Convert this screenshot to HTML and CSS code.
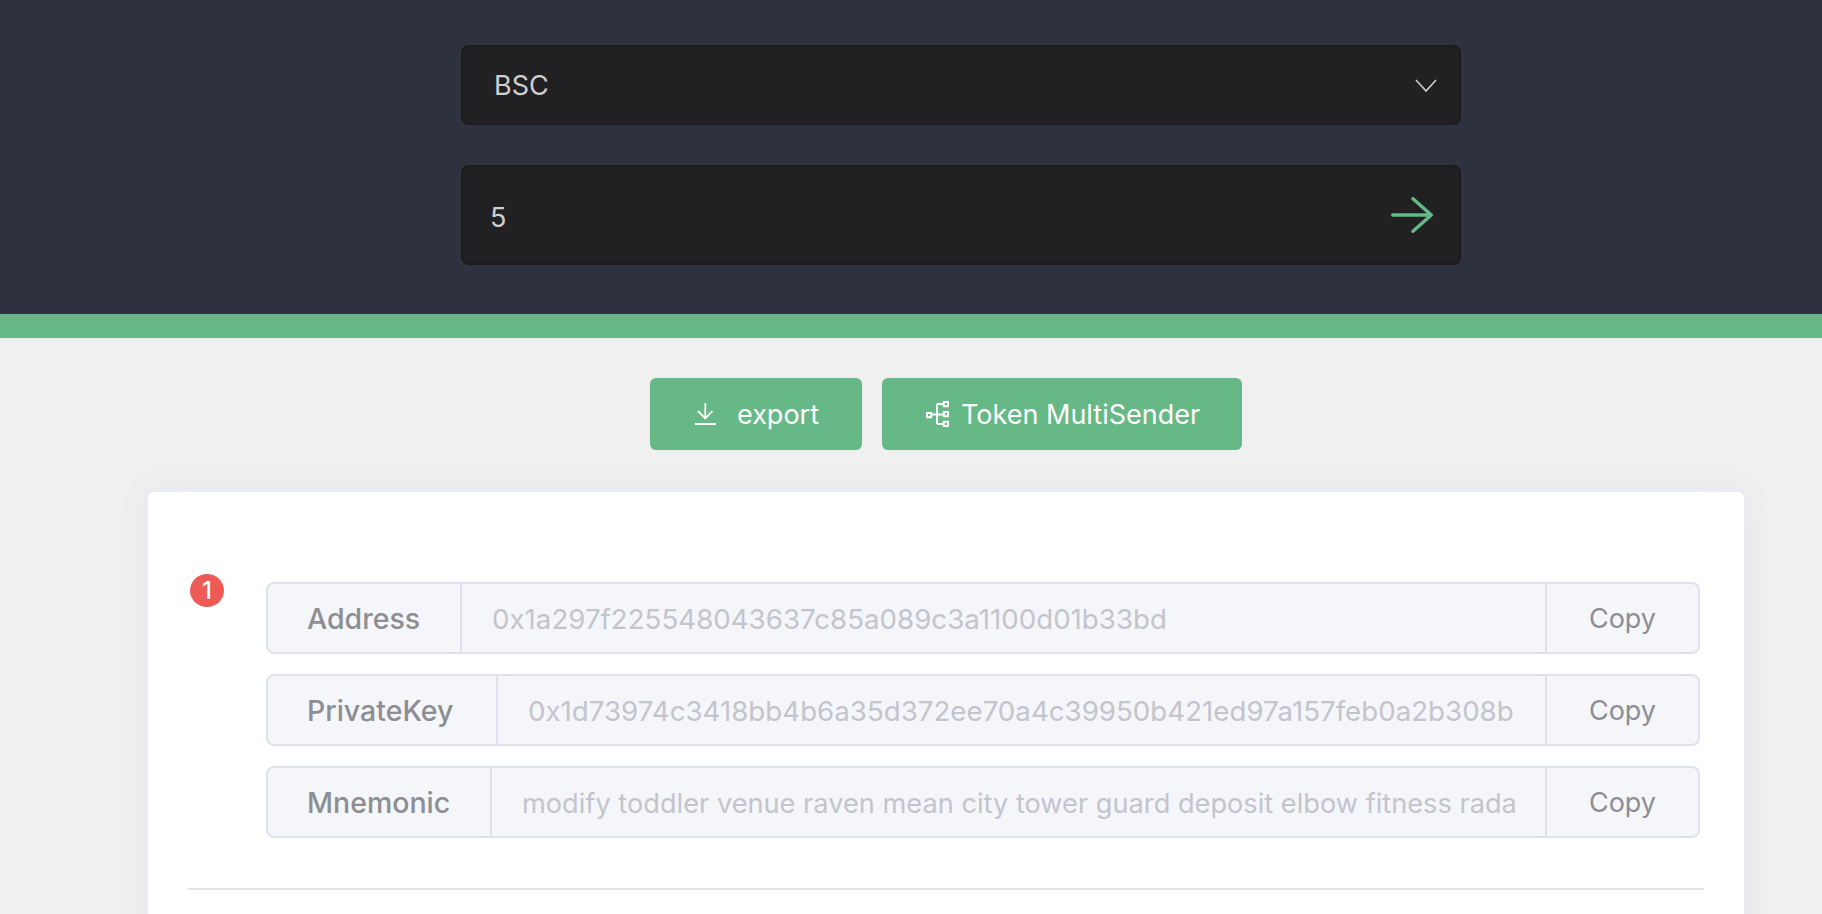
FILE: index.html
```html
<!DOCTYPE html>
<html lang="en">
<head>
<meta charset="utf-8">
<title>Wallet generator</title>
<link rel="stylesheet" href="styles.css">
</head>
<body>
<header class="hero">
  <div class="field field-select">
    <span class="field-value">BSC</span>
    <svg class="chevron" viewBox="0 0 22 13" width="22" height="13"><path d="M1 1l10 11L21 1" fill="none" stroke="#d0d0d0" stroke-width="1.6"/></svg>
  </div>
  <div class="field field-input">
    <span class="field-value field-number">5</span>
    <svg class="arrow" viewBox="0 0 42 36" width="42" height="36"><path d="M1.700 18H40M22 1.700L40.300 18 22 34.300" fill="none" stroke="#67b888" stroke-width="3.400" stroke-linecap="round" stroke-linejoin="round"/></svg>
  </div>
</header>
<div class="band"></div>
<div class="toolbar">
  <button class="btn btn-export">
    <svg class="icon" viewBox="0 0 21 22" width="21" height="22"><path d="M10.300 0v15.500M3 8l7.300 7.500L17.500 8M0 21h21" fill="none" stroke="#fff" stroke-width="1.800"/></svg>
    <span>export</span>
  </button>
  <button class="btn btn-sender">
    <svg class="icon" viewBox="0 0 23 26" width="23" height="26"><path d="M1 12h4.200v4.200H1zM17.800 1h4.200v4.200h-4.200zM17.800 11h4.200v4.200h-4.200zM17.800 20.800h4.200v4.200h-4.200zM5.200 13.500h12.600M11 3h6.800M11 23h6.800M11 3v20" fill="none" stroke="#fff" stroke-width="2"/></svg>
    <span>Token MultiSender</span>
  </button>
</div>
<main class="card">
  <section class="entry">
    <span class="badge">1</span>
    <div class="rows">
      <div class="row"><span class="addon label label-address">Address</span><span class="value"><span class="value-text">0x1a297f225548043637c85a089c3a1100d01b33bd</span></span><span class="addon copy">Copy</span></div>
      <div class="row"><span class="addon label label-key">PrivateKey</span><span class="value"><span class="value-text">0x1d73974c3418bb4b6a35d372ee70a4c39950b421ed97a157feb0a2b308b</span></span><span class="addon copy">Copy</span></div>
      <div class="row"><span class="addon label label-phrase">Mnemonic</span><span class="value value-words"><span class="value-text">modify toddler venue raven mean city tower guard deposit elbow fitness radar</span></span><span class="addon copy">Copy</span></div>
    </div>
  </section>
  <hr class="rule">
</main>
</body>
</html>
```
FILE: styles.css
```css
* { box-sizing: border-box; }
html, body { margin: 0; height: 914px; overflow: hidden; }
body { background: #f0f0f0; font-family: Inter, "Liberation Sans", sans-serif; }

.hero {
  background: #2d323e;
  height: 314px;
  padding: 45px 0 0 100px;
  display: flex;
  flex-direction: column;
  align-items: center;
  gap: 40px;
}
.field {
  width: 1000px;
  display: flex;
  align-items: center;
  justify-content: space-between;
  background: #212023;
  border: 2px solid #1b1b1d;
  border-radius: 8px;
  color: #cfcfcf;
  font-size: 27px;
}
.field-select { height: 80px; padding: 0 22px 0 31px; }
.field-input { height: 100px; padding: 0 26px 0 27px; }
.field-number { padding-top: 4px; }

.band { height: 24px; background: #66b887; }

.toolbar {
  display: flex;
  justify-content: center;
  gap: 20px;
  margin-top: 40px;
  padding-left: 70px;
}
.btn {
  height: 72px;
  display: flex;
  align-items: center;
  border: 0;
  border-radius: 6px;
  background: #66b887;
  color: #fff;
  font-family: Inter, "Liberation Sans", sans-serif;
  font-size: 27px;
}
.btn-export { width: 212px; padding: 0 0 0 45px; gap: 21px; }
.btn-sender { width: 360px; padding: 0 0 0 44px; gap: 12px; }
.icon { flex: none; }

.card {
  margin: 40px 76px 0 146px;
  height: 500px;
  padding: 90px 40px 0;
  background: #fff;
  border: 2px solid #e9ecf8;
  border-radius: 8px;
  box-shadow: 0 0 36px rgba(0, 0, 0, 0.05);
}
.entry { display: flex; padding: 0 4px 0 2px; }
.badge {
  flex: none;
  width: 34px;
  height: 33px;
  margin-top: -8px;
  margin-right: 42px;
  border-radius: 50%;
  background: #ee5a55;
  color: #fff;
  font-size: 24px;
  font-weight: 500;
  line-height: 33px;
  text-align: center;
}
.rows { flex: 1; display: flex; flex-direction: column; gap: 20px; min-width: 0; }
.row {
  height: 72px;
  display: flex;
  align-items: stretch;
  background: #f5f6fa;
  border: 2px solid #dfe2ec;
  border-radius: 8px;
  font-size: 27.700px;
}
.addon { flex: none; display: flex; align-items: center; color: #8d8e93; }
.label { padding: 0 0 0 39px; border-right: 2px solid #dfe2ec; font-weight: 500; font-size: 28.500px; }
.label-address { width: 194px; }
.label-key { width: 230px; }
.label-phrase { width: 224px; }
.copy { width: 153px; justify-content: center; border-left: 2px solid #dfe2ec; font-size: 27px; }
.value {
  flex: 1;
  min-width: 0;
  margin: 2px 29px 0 30px;
  display: flex;
  align-items: center;
  overflow: hidden;
  color: #c3c4cc;
}
.value-text { white-space: nowrap; }
.value-words { font-size: 27.200px; }
.rule { margin: 50px 0 0; border: 0; border-top: 2px solid #e4e5e9; }
```
